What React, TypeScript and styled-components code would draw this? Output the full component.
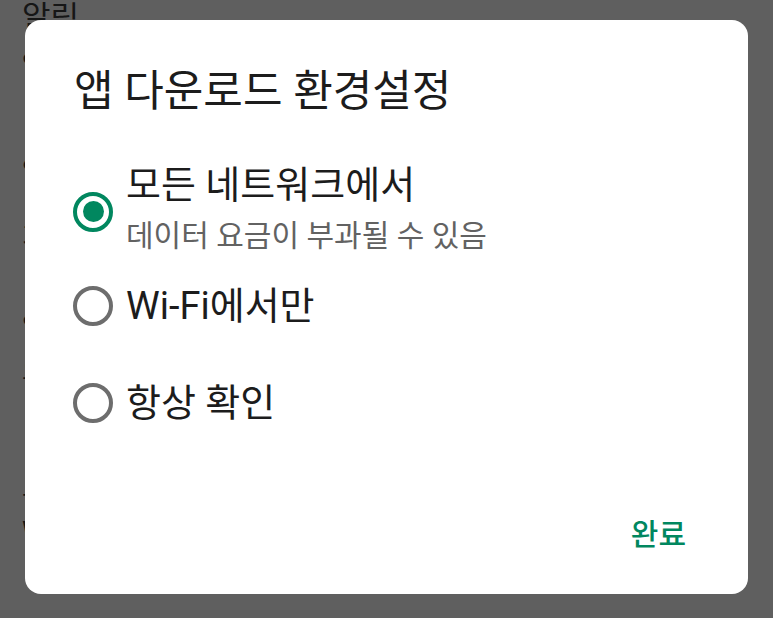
import styled, { createGlobalStyle } from "styled-components"

const GlobalStyle = createGlobalStyle`
    html, body {
        margin: 0;
        padding: 0;
        width: 100%;
        height: 100%;
        overflow: hidden;
    }
    body {
        font-family: Roboto, "Noto Sans CJK KR", "Noto Sans", sans-serif;
        background-color: #5f5f5f;
    }
`

const StyledScreen = styled.div`
    position: relative;
    width: 773px;
    height: 618px;
    overflow: hidden;
    background-color: #5f5f5f;
`

const StyledBackList = styled.div`
    display: flex;
    flex-direction: column;
    align-items: flex-start;
    padding-left: 22px;
    color: #161616;
`

const StyledBackHeading = styled.div`
    font-size: 31px;
    line-height: 32px;
    height: 32px;
    margin-top: 2px;
`

const StyledBackLine = styled.div<{ $top: number }>`
    font-size: 26px;
    line-height: 30px;
    height: 30px;
    margin-top: ${({ $top }) => $top}px;
`

const StyledOverlay = styled.div`
    position: absolute;
    inset: 0;
    display: flex;
    align-items: flex-start;
    justify-content: center;
    padding-top: 20px;
`

const StyledDialog = styled.div`
    display: flex;
    flex-direction: column;
    width: 723px;
    height: 574px;
    box-sizing: border-box;
    padding: 45px 0 34px 0;
    background-color: #fff;
    border-radius: 16px;
`

const StyledDialogTitle = styled.h2`
    margin: 0 0 43px 0;
    padding-left: 49px;
    font-size: 43px;
    line-height: 52px;
    font-weight: 400;
    color: #1c1c1c;
`

const StyledOptionList = styled.div`
    display: flex;
    flex-direction: column;
    padding-left: 48px;
`

const StyledOptionRow = styled.label`
    display: flex;
    align-items: center;
    gap: 13px;
    min-height: 97px;
    cursor: pointer;
`

const StyledRadio = styled.span<{ $checked: boolean }>`
    flex: none;
    display: flex;
    align-items: center;
    justify-content: center;
    width: 40px;
    height: 40px;
    box-sizing: border-box;
    border-radius: 50%;
    border: 4px solid ${({ $checked }) => ($checked ? "#01875f" : "#6d6d6d")};

    &::after {
        content: "";
        display: ${({ $checked }) => ($checked ? "block" : "none")};
        width: 21px;
        height: 21px;
        border-radius: 50%;
        background-color: #01875f;
    }
`

const StyledSelectedRadio = styled(StyledRadio)`
    margin-top: 6px;
`

const StyledOptionText = styled.div`
    display: flex;
    flex-direction: column;
`

const StyledOptionLabel = styled.span`
    font-size: 38px;
    line-height: 48px;
    color: #1c1c1c;
`

const StyledOptionHint = styled.span`
    margin-top: 7px;
    font-size: 30px;
    line-height: 40px;
    color: #626262;
`

const StyledFooter = styled.div`
    display: flex;
    justify-content: flex-end;
    margin-top: auto;
    padding-right: 54px;
`

const StyledDoneButton = styled.button`
    height: 56px;
    padding: 0 8px;
    border: none;
    background: none;
    font-family: inherit;
    font-size: 30px;
    font-weight: 500;
    color: #01875f;
    cursor: pointer;
`

const options = [
    { label: "모든 네트워크에서", hint: "데이터 요금이 부과될 수 있음", checked: true },
    { label: "Wi-Fi에서만", checked: false },
    { label: "항상 확인", checked: false },
]

// rows of the settings page behind the scrim; only their first letters peek out
const backLines = [
    { text: "앱", top: 16 },
    { text: "업", top: 76 },
    { text: "기", top: 36 },
    { text: "알", top: 60 },
    { text: "오", top: 14 },
    { text: "그", top: 87 },
    { text: "W", top: 13 },
]

export default function App() {
    return (
        <>
            <GlobalStyle />
            <StyledScreen>
                <StyledBackList>
                    <StyledBackHeading>알림</StyledBackHeading>
                    {backLines.map((line, index) => (
                        <StyledBackLine key={index} $top={line.top}>
                            {line.text}
                        </StyledBackLine>
                    ))}
                </StyledBackList>
                <StyledOverlay>
                    <StyledDialog>
                        <StyledDialogTitle>앱 다운로드 환경설정</StyledDialogTitle>
                        <StyledOptionList>
                            {options.map((option) => {
                                const Radio = option.hint ? StyledSelectedRadio : StyledRadio
                                return (
                                    <StyledOptionRow key={option.label}>
                                        <Radio $checked={option.checked} />
                                        <StyledOptionText>
                                            <StyledOptionLabel>{option.label}</StyledOptionLabel>
                                            {option.hint && <StyledOptionHint>{option.hint}</StyledOptionHint>}
                                        </StyledOptionText>
                                    </StyledOptionRow>
                                )
                            })}
                        </StyledOptionList>
                        <StyledFooter>
                            <StyledDoneButton>완료</StyledDoneButton>
                        </StyledFooter>
                    </StyledDialog>
                </StyledOverlay>
            </StyledScreen>
        </>
    )
}
